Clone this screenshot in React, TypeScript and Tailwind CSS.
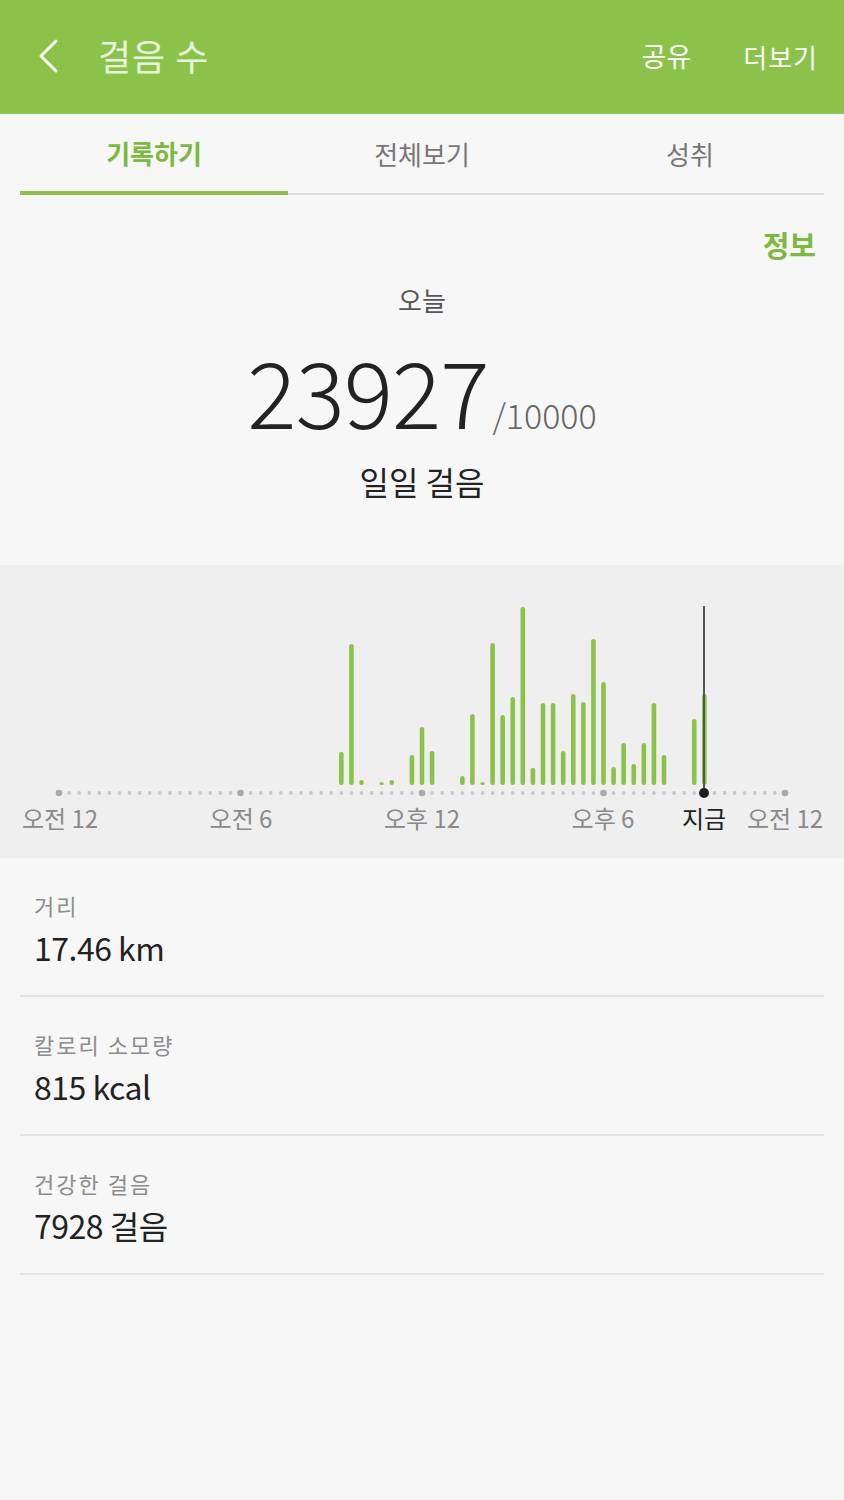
import React from 'react';

const GREEN = '#8bc34a';

// slot index (20-minute steps from midnight) -> bar height in px
const bars: [number, number][] = [
  [28, 33], [29, 141], [30, 5], [32, 3], [33, 5], [35, 30], [36, 58], [37, 34],
  [40, 9], [41, 71], [42, 3], [43, 142], [44, 70], [45, 88], [46, 178], [47, 17],
  [48, 82], [49, 82], [50, 34], [51, 91], [52, 83], [53, 146], [54, 103], [55, 18],
  [56, 42], [57, 21], [58, 42], [59, 82], [60, 30], [63, 66], [64, 91],
];

const slotX = (i: number) => 59 + (i * 726) / 72;

const labels = [
  { x: 60, text: '오전 12' },
  { x: 241, text: '오전 6' },
  { x: 422, text: '오후 12' },
  { x: 603, text: '오후 6' },
  { x: 704, text: '지금', now: true },
  { x: 785, text: '오전 12' },
];

const StepChart: React.FC = () => {
  const dots = Array.from({ length: 73 }, (_, i) => i);
  return (
    <svg width="844" height="293" viewBox="0 0 844 293" className="block">
      {dots.map((i) => {
        const major = i % 18 === 0;
        return (
          <circle
            key={i}
            cx={slotX(i)}
            cy={228}
            r={major ? 3.3 : 1.9}
            fill={major ? '#a9a9a9' : '#c9c9c9'}
          />
        );
      })}
      {bars.map(([slot, h]) => (
        <rect
          key={slot}
          x={slotX(slot) - 2.3}
          y={220 - h}
          width={4.6}
          height={h}
          rx={2.3}
          fill={GREEN}
        />
      ))}
      <line x1={704} y1={41} x2={704} y2={228} stroke="#555" strokeWidth={2} />
      <circle cx={704} cy={228} r={5} fill="#1e1e1e" />
      {labels.map((l) => (
        <text
          key={l.text + l.x}
          x={l.x}
          y={263}
          textAnchor="middle"
          fontSize={24}
          fill={l.now ? '#222' : '#8a8a8a'}
          style={{ fontFamily: '"Noto Sans CJK KR", sans-serif' }}
        >
          {l.text}
        </text>
      ))}
    </svg>
  );
};

const StatRow: React.FC<{ label: string; value: string }> = ({ label, value }) => (
  <div className="mx-5 h-[139px] border-b-2 border-[#e4e4e4] px-[14px] pt-[31px]">
    <div className="text-[22px] leading-[32px] tracking-[2px] text-[#8c8c8c]">{label}</div>
    <div className="mt-[6px] text-[32px] leading-[40px] tracking-[-0.5px] text-[#222]">{value}</div>
  </div>
);

export default function App() {
  return (
    <div
      className="w-[844px] min-h-[1500px] bg-[#f7f7f7]"
      style={{ fontFamily: '"Noto Sans CJK KR", "Noto Sans", sans-serif' }}
    >
      <header className="h-[114px] bg-[#8bc34a] flex items-center text-white">
        <svg width="24" height="36" viewBox="0 0 24 36" className="ml-[36px] mb-[2px]">
          <path d="M20 3 L5 18 L20 33" fill="none" stroke="#fff" strokeWidth="3" strokeLinecap="round" strokeLinejoin="round" />
        </svg>
        <h1 className="ml-[38px] mb-[4px] text-[36px] tracking-[1px] text-[#e9f4dc] flex-1">걸음 수</h1>
        <button className="text-[27px] mr-[52px] mb-[2px]">공유</button>
        <button className="text-[26px] mr-[26px] mb-[2px] tracking-[1px]">더보기</button>
      </header>

      <nav className="mx-5 h-[81px] flex relative">
        <div className="flex-1 flex items-center justify-center border-b-4 border-[#8bc34a]">
          <span className="text-[26px] font-bold text-[#7cb93f] mt-[-1px]">기록하기</span>
        </div>
        <div className="flex-[2] flex border-b-2 border-[#dedede] self-stretch">
          <div className="flex-1 flex items-center justify-center">
            <span className="text-[26px] text-[#777] mt-[-1px]">전체보기</span>
          </div>
          <div className="flex-1 flex items-center justify-center">
            <span className="text-[26px] text-[#777] mt-[-1px]">성취</span>
          </div>
        </div>
      </nav>

      <section className="h-[370px] flex flex-col items-center relative">
        <div className="self-end mr-[28px] mt-[29px] text-[29px] font-bold text-[#7cb93f] leading-[40px]">정보</div>
        <div className="mt-[18px] text-[26px] text-[#555] leading-[36px]">오늘</div>
        <div className="mt-[25px] flex items-baseline leading-none">
          <span className="text-[92px] font-light text-[#222] tracking-[-1px]">23927</span>
          <span className="text-[34px] font-light text-[#666] ml-[4px]">/10000</span>
        </div>
        <div className="mt-[24px] text-[32px] text-[#222] leading-[44px]">일일 걸음</div>
      </section>

      <section className="bg-[#efefef]">
        <StepChart />
      </section>

      <StatRow label="거리" value="17.46 km" />
      <StatRow label="칼로리 소모량" value="815 kcal" />
      <StatRow label="건강한 걸음" value="7928 걸음" />
    </div>
  );
}
